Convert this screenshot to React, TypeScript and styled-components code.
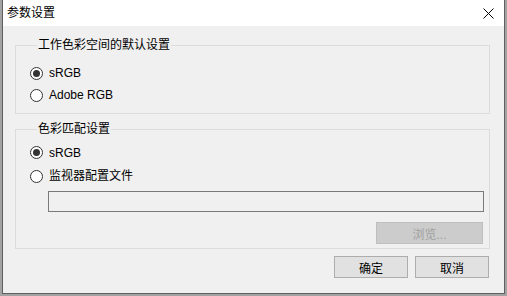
import React, { useState } from "react";
import styled, { createGlobalStyle } from "styled-components";

const GlobalStyle = createGlobalStyle`
  html, body {
    margin: 0;
    padding: 0;
    background: #a3a3a3;
  }
  body {
    font-family: "Liberation Sans", "Noto Sans CJK SC", sans-serif;
    font-size: 12px;
    color: #000;
  }
`;

const Window = styled.div`
  margin-left: 2px;
  width: 501px;
  height: 293px;
  border: 1px solid #5f5f5f;
  border-top: none;
  background: #f0f0f0;
  display: flex;
  flex-direction: column;
`;

const TitleBar = styled.div`
  height: 26px;
  background: #fff;
  display: flex;
  align-items: center;
  justify-content: space-between;
  padding: 0 10px 0 4px;
  flex-shrink: 0;
`;

const Title = styled.span`
  font-size: 12px;
  line-height: 14px;
  margin-top: -1px;
`;

const CloseButton = styled.button`
  border: none;
  background: none;
  padding: 0;
  width: 12px;
  height: 12px;
  display: flex;
  align-items: center;
  justify-content: center;
`;

const Body = styled.div`
  padding: 11px 14px 0 12px;
  display: flex;
  flex-direction: column;
`;

const Group = styled.fieldset<{ $gapTop?: number }>`
  margin: ${(p) => p.$gapTop ?? 0}px 0 0 0;
  border: 1px solid #dcdcdc;
  padding: 0 5px 0 14px;
  min-width: 0;
  display: flex;
  flex-direction: column;
`;

const Legend = styled.legend`
  margin-left: 7px;
  padding: 0 1px;
  font-size: 12px;
  line-height: 16px;
`;

const Spacer = styled.div<{ $h: number }>`
  height: ${(p) => p.$h}px;
`;

const RadioRow = styled.label<{ $h: number }>`
  height: ${(p) => p.$h}px;
  display: flex;
  align-items: center;
  gap: 6px;
`;

const RadioCircle = styled.span<{ $on: boolean }>`
  width: 11px;
  height: 11px;
  border: 1px solid #333;
  border-radius: 50%;
  background: #fff;
  display: flex;
  align-items: center;
  justify-content: center;
  &::after {
    content: "";
    width: 7px;
    height: 7px;
    border-radius: 50%;
    background: ${(p) => (p.$on ? "#333" : "transparent")};
  }
`;

const RadioText = styled.span`
  line-height: 14px;
`;

const PathBox = styled.div`
  margin: 3px 0 0 18px;
  height: 19px;
  border: 1px solid #7a7a7a;
  background: #f0f0f0;
`;

const BrowseRow = styled.div`
  display: flex;
  justify-content: flex-end;
  margin: 10px 1px 4px 0;
`;

const Button = styled.button<{ $disabled?: boolean }>`
  width: ${(p) => (p.$disabled ? 107 : 74)}px;
  height: 22px;
  padding: 0;
  font-family: inherit;
  font-size: 12px;
  background: ${(p) => (p.$disabled ? "#cccccc" : "#e1e1e1")};
  border: 1px solid ${(p) => (p.$disabled ? "#bfbfbf" : "#adadad")};
  color: ${(p) => (p.$disabled ? "#a0a0a0" : "#000")};
`;

const Footer = styled.div`
  display: flex;
  justify-content: flex-end;
  gap: 7px;
  margin: 7px 1px 0 0;
`;

type RadioProps = {
  label: string;
  on: boolean;
  h: number;
  onPick: () => void;
};

const Radio = ({ label, on, h, onPick }: RadioProps) => (
  <RadioRow $h={h} onClick={onPick}>
    <RadioCircle $on={on} />
    <RadioText>{label}</RadioText>
  </RadioRow>
);

export default function App() {
  const [space, setSpace] = useState("srgb");
  const [match, setMatch] = useState("srgb");

  return (
    <>
      <GlobalStyle />
      <Window>
        <TitleBar>
          <Title>参数设置</Title>
          <CloseButton>
            <svg width="11" height="11" viewBox="0 0 11 11">
              <path d="M0.5 0.5L10.5 10.5M10.5 0.5L0.5 10.5" stroke="#000" strokeWidth="1" />
            </svg>
          </CloseButton>
        </TitleBar>
        <Body>
          <Group>
            <Legend>工作色彩空间的默认设置</Legend>
            <Spacer $h={9} />
            <Radio label="sRGB" h={22} on={space === "srgb"} onPick={() => setSpace("srgb")} />
            <Radio label="Adobe RGB" h={22} on={space === "adobe"} onPick={() => setSpace("adobe")} />
            <Spacer $h={7} />
          </Group>
          <Group $gapTop={7}>
            <Legend>色彩匹配设置</Legend>
            <Spacer $h={4} />
            <Radio label="sRGB" h={23} on={match === "srgb"} onPick={() => setMatch("srgb")} />
            <Radio label="监视器配置文件" h={24} on={match === "monitor"} onPick={() => setMatch("monitor")} />
            <PathBox />
            <BrowseRow>
              <Button $disabled>浏览...</Button>
            </BrowseRow>
          </Group>
          <Footer>
            <Button>确定</Button>
            <Button>取消</Button>
          </Footer>
        </Body>
      </Window>
    </>
  );
}
